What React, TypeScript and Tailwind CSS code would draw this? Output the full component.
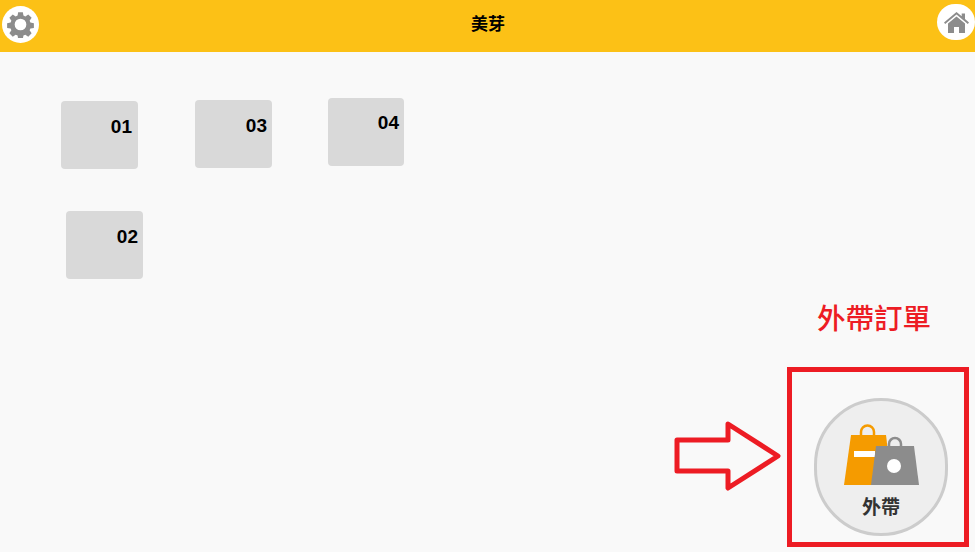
const tables = [
  { name: '01', className: 'left-[61px] top-[49px] w-[77px] pt-[15px] pr-[6px]' },
  { name: '03', className: 'left-[195px] top-[48px] w-[77px] pt-[15px] pr-[5px]' },
  { name: '04', className: 'left-[328px] top-[46px] w-[76px] pt-[14px] pr-[5px]' },
  { name: '02', className: 'left-[66px] top-[159px] w-[77px] pt-[15px] pr-[5px]' },
]

const GearIcon = () => (
  <svg viewBox="0 0 24 24" className="w-[27px] h-[27px]" fill="#8c8c8c">
    <path
      fillRule="evenodd"
      d="M9.900 1h4.200l.5 3.100 1.700.7 2.600-1.800 3 3-1.800 2.600.7 1.700 3.100.5v4.200l-3.100.5-.7 1.700 1.800 2.600-3 3-2.600-1.800-1.700.7-.5 3.100H9.900l-.5-3.100-1.700-.7L5.100 22.800l-3-3 1.800-2.600-.7-1.700L.1 15V10.800l3.100-.5.7-1.700L2.100 6l3-3 2.600 1.800 1.700-.7zM12 6.800a5.200 5.200 0 1 0 0 10.400 5.200 5.200 0 0 0 0-10.400z"
    />
  </svg>
)

const HomeIcon = () => (
  <svg viewBox="0 0 25 21" className="w-[25px] h-[21px]" fill="#8c8c8c">
    <path d="M12.500 0 0 10.500l1.200 1.400L12.500 2.500l11.300 9.400 1.200-1.400-4-3.400V1.500h-3.300v2.800z" />
    <path d="M12.500 4.500 4 11.600V21h6v-6h5v6h6v-9.400z" />
  </svg>
)

const BagsIcon = () => (
  <svg viewBox="0 0 75 61" className="w-[75px] h-[61px]">
    <path d="M17 12V8a6.500 6.500 0 0 1 13 0v4" fill="none" stroke="#f59b00" strokeWidth="2.500" />
    <path d="M7 11h35l6 50H0z" fill="#f59b00" />
    <rect x="10" y="27" width="21" height="6" fill="#ffffff" />
    <path d="M45 23v-3a6 6 0 0 1 12 0v3" fill="none" stroke="#8c8c8c" strokeWidth="2.500" />
    <path d="M32 22h38l5 39H27z" fill="#8c8c8c" />
    <circle cx="50" cy="42" r="7" fill="#ffffff" />
  </svg>
)

export default function App() {
  return (
    <div
      className="relative w-[975px] h-[552px] overflow-hidden bg-[#f9f9f9]"
      style={{ fontFamily: '"Liberation Sans", "Noto Sans CJK TC", sans-serif' }}
    >
      <header className="flex items-center justify-between h-[52px] bg-[#fcc116] pl-[2px]">
        <div className="flex items-center justify-center w-[37px] h-[37px] mb-[3px] rounded-full bg-white">
          <GearIcon />
        </div>
        <h1 className="mb-[3px] text-[17px] font-bold text-black">美芽</h1>
        <div className="flex items-center justify-center w-[38px] h-[36px] mb-[8px] rounded-full bg-white">
          <HomeIcon />
        </div>
      </header>

      {/* floor plan */}
      <main className="relative h-[500px]">
        {tables.map((table) => (
          <div
            key={table.name}
            className={`absolute h-[68px] rounded-[4px] bg-[#d9d9d9] text-right text-[19px] leading-[22px] font-bold text-black ${table.className}`}
          >
            {table.name}
          </div>
        ))}
      </main>

      {/* annotation */}
      <div className="absolute left-[817px] top-[301px] text-[28.500px] leading-[36px] font-medium text-[#ed1c24]">外帶訂單</div>
      <svg className="absolute left-[674px] top-[420px] w-[110px] h-[72px]" viewBox="0 0 110 72">
        <path d="M3 20h51V4l50 32-50 32V51H3z" fill="none" stroke="#ed1c24" strokeWidth="5" strokeLinejoin="round" />
      </svg>
      <div className="absolute left-[787px] top-[367px] w-[182px] h-[180px] pl-[22px] pt-[26px] border-[5px] border-[#ed1c24]">
        <button className="flex flex-col items-center w-[134px] h-[138px] rounded-full border-[3px] border-[#cccccc] bg-[#eeeeee] pt-[23px]">
          <BagsIcon />
          <span className="mt-[11px] text-[19px] leading-[24px] font-bold text-[#333333]">外帶</span>
        </button>
      </div>
    </div>
  )
}
